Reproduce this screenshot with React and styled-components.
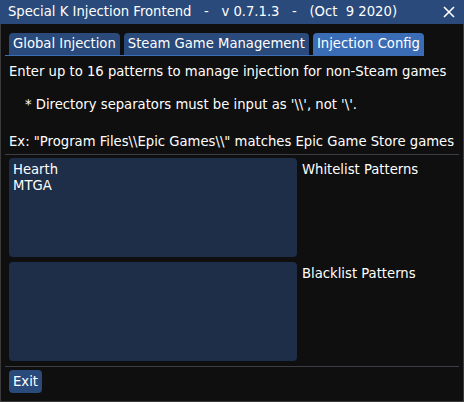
import React from 'react'
import styled, { createGlobalStyle } from 'styled-components'

const GlobalStyle = createGlobalStyle`
  html, body {
    margin: 0;
    padding: 0;
    background: #0f0f0f;
  }
  body {
    font-family: "DejaVu Sans", "Noto Sans", sans-serif;
    font-size: 13.2px;
    color: #ffffff;
  }
`

const tabs = ['Global Injection', 'Steam Game Management', 'Injection Config']

const App = () => {
  return (
    <>
      <GlobalStyle />
      <Window>
        <TitleBar>
          <TitleText>Special K Injection Frontend&nbsp;&nbsp;&nbsp;-&nbsp;&nbsp;&nbsp;v 0.7.1.3&nbsp;&nbsp;&nbsp;-&nbsp;&nbsp;&nbsp;(Oct&nbsp;&nbsp;9 2020)</TitleText>
          <CloseButton>
            <svg width="12" height="12" viewBox="0 0 12 12">
              <path d="M1 1 L11 11 M11 1 L1 11" stroke="#ffffff" strokeWidth="1.6" />
            </svg>
          </CloseButton>
        </TitleBar>

        <Content>
          <TabBar>
            {tabs.map((t, i) => (
              <Tab key={t} $active={i === 2}>{t}</Tab>
            ))}
          </TabBar>

          <Line $top={8}>Enter up to 16 patterns to manage injection for non-Steam games</Line>
          <Line $top={17} $indent>* Directory separators must be input as '\\', not '\'.</Line>
          <Line $top={21}>Ex: "Program Files\\Epic Games\\" matches Epic Game Store games</Line>

          <Separator $top={4} />

          <Patterns>
            <PatternRow>
              <PatternBox>
                <span>Hearth</span>
                <span>MTGA</span>
              </PatternBox>
              <PatternLabel>Whitelist Patterns</PatternLabel>
            </PatternRow>

            <PatternRow>
              <PatternBox />
              <PatternLabel>Blacklist Patterns</PatternLabel>
            </PatternRow>
          </Patterns>

          <Separator $top={5} />

          <ExitButton>Exit</ExitButton>
        </Content>
      </Window>
    </>
  )
}

const Window = styled.div`
  width: 464px;
  height: 402px;
  box-sizing: border-box;
  border: 1px solid #3b3b3b;
  border-top: none;
  background: #0f0f0f;
  display: flex;
  flex-direction: column;
`
const TitleBar = styled.div`
  height: 24px;
  margin: 0 -1px;
  padding: 0 8px;
  background: #294a7a;
  display: flex;
  align-items: center;
  justify-content: space-between;
`
const TitleText = styled.span`
  white-space: nowrap;
  line-height: 24px;
`
const CloseButton = styled.span`
  display: flex;
  align-items: center;
  margin-right: 1px;
`
const Content = styled.div`
  padding: 9px 4px 0 4px;
  display: flex;
  flex-direction: column;
`
const TabBar = styled.div`
  display: flex;
  gap: 4px;
  padding-left: 4px;
  align-self: flex-start;
  border-bottom: 1px solid #3a6db5;
`
const Tab = styled.div`
  height: 22px;
  line-height: 22px;
  padding: 0 4px;
  border-radius: 4px 4px 0 0;
  background: ${({ $active }) => ($active ? '#3a6db5' : '#294a7a')};
  white-space: nowrap;
`
const Line = styled.div`
  margin-top: ${({ $top }) => $top}px;
  padding-left: ${({ $indent }) => ($indent ? '20px' : '4px')};
  line-height: 16px;
  white-space: nowrap;
`
const Separator = styled.div`
  height: 1px;
  background: #3d3d46;
  margin: ${({ $top }) => $top}px 0 3px;
`
const Patterns = styled.div`
  display: flex;
  flex-direction: column;
  gap: 5px;
`
const PatternRow = styled.div`
  display: flex;
  gap: 5px;
  padding-left: 4px;
`
const PatternBox = styled.div`
  width: 288px;
  height: 99px;
  box-sizing: border-box;
  padding: 4px 4px;
  border-radius: 4px;
  background: #1e2d48;
  display: flex;
  flex-direction: column;
  line-height: 16px;
`
const PatternLabel = styled.div`
  padding-top: 4px;
  line-height: 16px;
`
const ExitButton = styled.div`
  align-self: flex-start;
  margin-left: 4px;
  height: 23px;
  line-height: 23px;
  padding: 0 4px;
  border-radius: 4px;
  background: #294a7a;
`

export default App
